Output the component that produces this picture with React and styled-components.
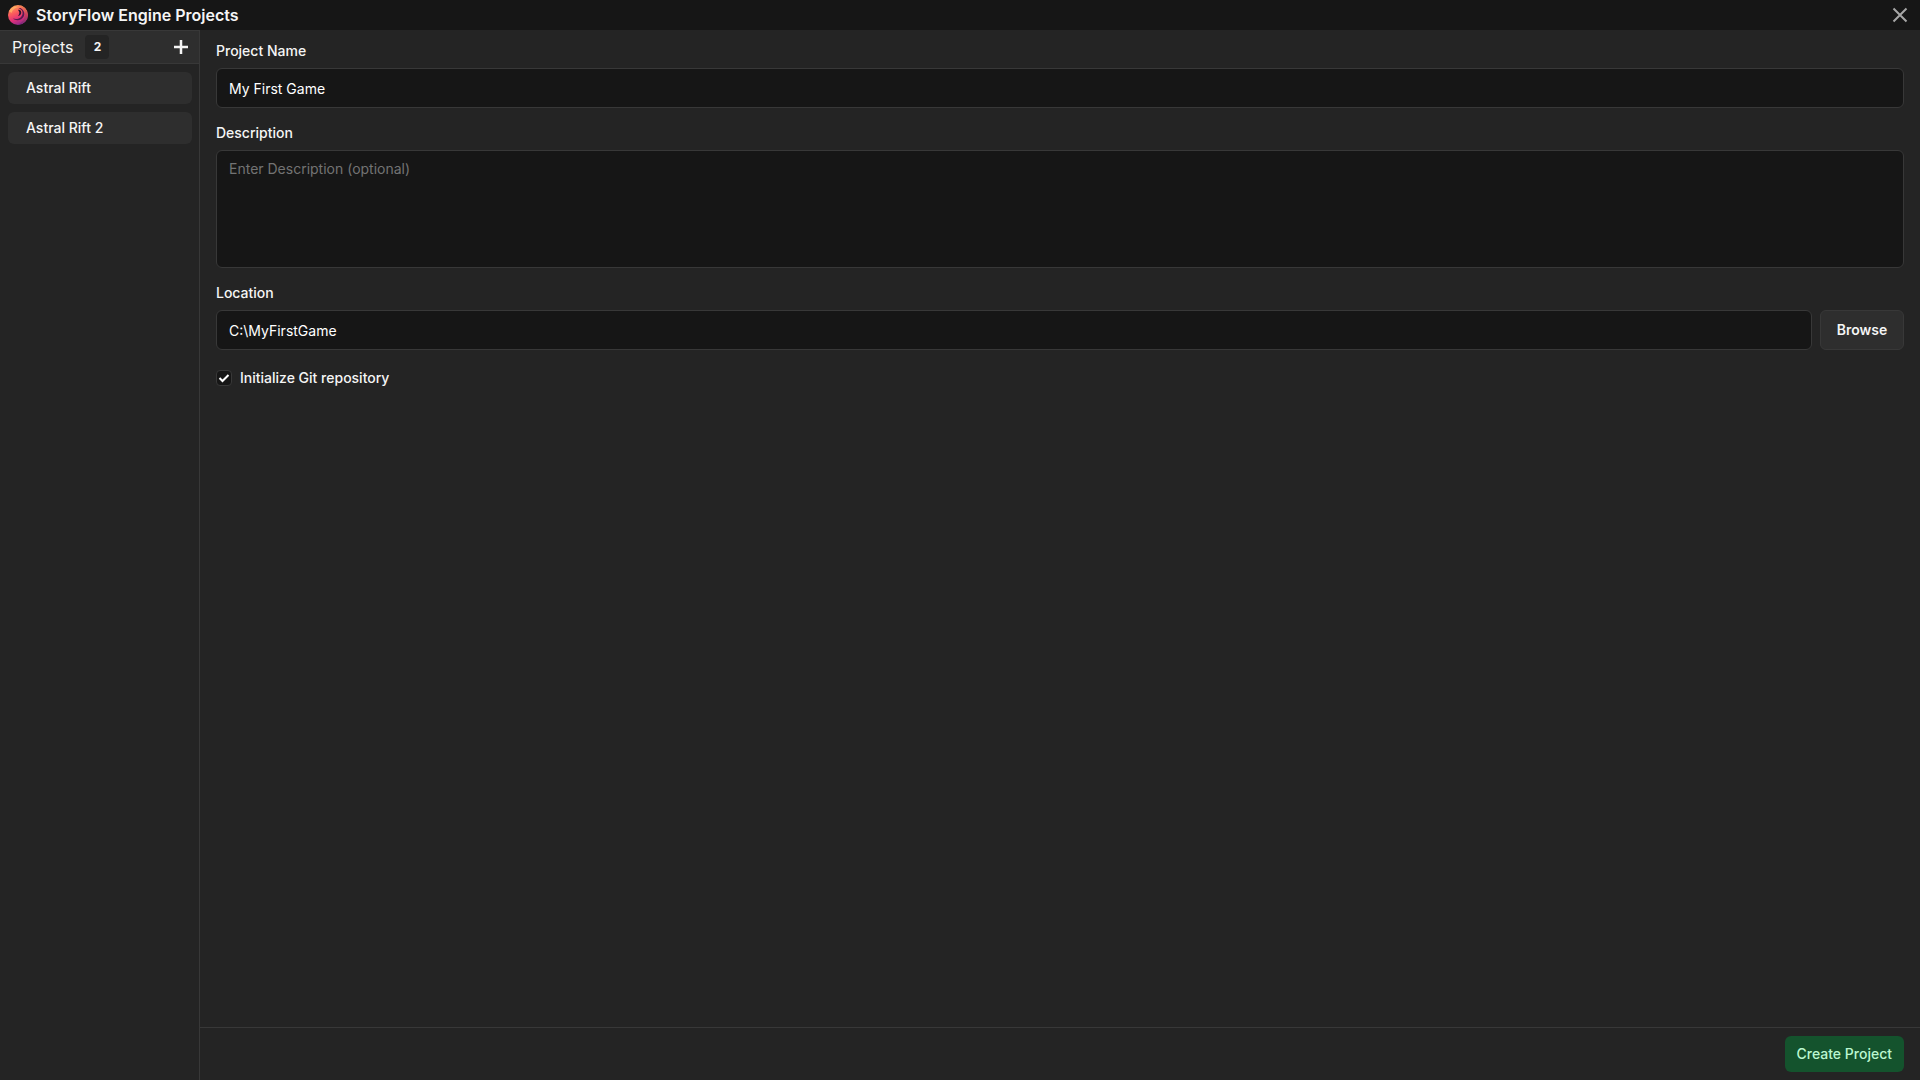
import React, { useState } from "react";
import styled, { createGlobalStyle } from "styled-components";

const GlobalStyle = createGlobalStyle`
  *, *::before, *::after { box-sizing: border-box; }
  body {
    margin: 0;
    background: #242424;
    color: #f5f5f5;
    font-family: Inter, "Liberation Sans", sans-serif;
    font-size: 14px;
    line-height: 20px;
  }
  button, input, textarea { font: inherit; color: inherit; margin: 0; }
  button { cursor: pointer; }
`;

const Window = styled.div`
  display: flex;
  flex-direction: column;
  min-height: 100vh;
`;

const TitleBar = styled.header`
  display: flex;
  align-items: center;
  gap: 8px;
  height: 30px;
  padding: 0 8px;
  background: #161616;
`;

const Title = styled.h1`
  flex: 1;
  margin: 0;
  font-size: 16px;
  line-height: 24px;
  font-weight: 600;
`;

const IconButton = styled.button`
  display: flex;
  align-items: center;
  justify-content: center;
  width: 24px;
  height: 24px;
  padding: 0;
  border: 0;
  background: transparent;
  color: ${({ $muted }) => ($muted ? "#a6a6a6" : "#f5f5f5")};
`;

const Body = styled.div`
  display: flex;
  flex: 1;
`;

const Sidebar = styled.aside`
  flex: none;
  width: 200px;
  border-right: 1px solid #383838;
`;

const SidebarHeader = styled.div`
  display: flex;
  align-items: center;
  gap: 12px;
  height: 34px;
  padding: 0 6px 0 12px;
  border-top: 1px solid #383838;
  border-bottom: 1px solid #383838;
  background: #2e2e2e;
`;

const SidebarTitle = styled.h2`
  margin: 0;
  font-size: 16px;
  line-height: 24px;
  font-weight: 400;
`;

const Count = styled.span`
  width: 24px;
  margin-right: auto;
  border-radius: 4px;
  background: #242424;
  font-size: 12px;
  line-height: 24px;
  font-weight: 700;
  text-align: center;
`;

const ProjectList = styled.nav`
  display: flex;
  flex-direction: column;
  gap: 8px;
  padding: 8px 7px 8px 8px;
`;

const ProjectItem = styled.button`
  height: 32px;
  padding: 0 18px;
  border: 0;
  border-radius: 6px;
  background: #2e2e2e;
  font-weight: 500;
  text-align: left;
`;

const Main = styled.form`
  display: flex;
  flex: 1;
  flex-direction: column;
  min-width: 0;
`;

const Fields = styled.div`
  display: flex;
  flex: 1;
  flex-direction: column;
  gap: 16px;
  padding: 12px 16px;
`;

const Field = styled.div`
  display: flex;
  flex-direction: column;
  gap: 8px;
`;

const Label = styled.label`
  line-height: 18px;
  font-weight: 500;
`;

const TextInput = styled.input`
  flex: 1;
  min-width: 0;
  min-height: 40px;
  padding: 2px 12px 0;
  border: 1px solid #383838;
  border-radius: 6px;
  outline: none;
  background: #161616;
  color: #fff;
`;

const TextArea = styled.textarea`
  display: block;
  height: 118px;
  padding: 8px 12px;
  border: 1px solid #383838;
  border-radius: 6px;
  outline: none;
  background: #161616;
  resize: none;
  &::placeholder { color: #737373; opacity: 1; }
`;

const InputRow = styled.div`
  display: flex;
  gap: 8px;
`;

const BrowseButton = styled.button`
  width: 84px;
  padding: 0;
  border: 1px solid #383838;
  border-radius: 6px;
  background: #2e2e2e;
  font-weight: 600;
`;

const CheckRow = styled.div`
  display: flex;
  align-items: center;
  gap: 8px;
  height: 24px;
`;

const CheckWrap = styled.span`
  display: grid;
  place-items: center;
  & > * { grid-area: 1 / 1; }
  svg { pointer-events: none; }
`;

const Checkbox = styled.input`
  appearance: none;
  width: 16px;
  height: 16px;
  border: 1px solid #383838;
  border-radius: 4px;
  background: #161616;
`;

const Footer = styled.footer`
  display: flex;
  justify-content: flex-end;
  padding: 8px 16px;
  border-top: 1px solid #383838;
`;

const CreateButton = styled.button`
  height: 36px;
  padding: 0 12px;
  border: 0;
  border-radius: 6px;
  background: #14532d;
  color: #bbf7d0;
  font-weight: 500;
`;

function Logo() {
  return (
    <svg width="20" height="20" viewBox="0 0 20 20" aria-hidden="true">
      <defs>
        <linearGradient id="body" x1="0.2" y1="0" x2="0.6" y2="1">
          <stop offset="0" stopColor="#ffa85a" />
          <stop offset="0.4" stopColor="#fb5a5c" />
          <stop offset="0.7" stopColor="#e0307a" />
          <stop offset="1" stopColor="#8a2a8c" />
        </linearGradient>
        <linearGradient id="back" x1="0.5" y1="0" x2="0.4" y2="1">
          <stop offset="0" stopColor="#f08a4c" />
          <stop offset="0.45" stopColor="#c8405c" />
          <stop offset="1" stopColor="#7a2480" />
        </linearGradient>
        <clipPath id="disc"><circle cx="10" cy="10" r="10" /></clipPath>
      </defs>
      <g clipPath="url(#disc)">
        <rect width="20" height="20" fill="url(#body)" />
        <path d="M11 0C17 0 20 5 20 10C20 16 15 20 9 20C14 18 17 14 17 9C17 5 14.500 2 11 0Z" fill="url(#back)" />
        <path d="M10.500 3.500C13.500 4 15 6.500 14.500 9C13.800 13 9.500 15 5 13.500C8 16.500 14 15.500 16 11C17.200 8 15.500 4.500 12.500 3C11.800 2.800 11 3 10.500 3.500Z" fill="#571b50" />
        <path d="M9.800 4.800C12 4.300 13.700 6 13.200 8.300C12.700 10 11.300 11 9.800 11.200C11 9.800 11.600 8.300 11.200 7C10.900 6.200 10.400 5.500 9.800 4.800Z" fill="#2b1430" />
        <path d="M1 6C3 2 7 0.500 10.500 2C7 2.500 4.500 4.500 3.500 8Z" fill="#ffb866" opacity="0.7" />
      </g>
    </svg>
  );
}

export default function App() {
  const [name, setName] = useState("My First Game");
  const [description, setDescription] = useState("");
  const [location, setLocation] = useState("C:\\MyFirstGame");
  const [git, setGit] = useState(true);
  const projects = ["Astral Rift", "Astral Rift 2"];

  return (
    <Window>
      <GlobalStyle />
      <TitleBar>
        <Logo />
        <Title>StoryFlow Engine Projects</Title>
        <IconButton type="button" aria-label="Close" $muted>
          <svg width="16" height="16" viewBox="0 0 16 16" fill="none" stroke="currentColor" strokeWidth="2">
            <path d="M1.500 1.500L14.500 14.500M14.500 1.500L1.500 14.500" />
          </svg>
        </IconButton>
      </TitleBar>
      <Body>
        <Sidebar>
          <SidebarHeader>
            <SidebarTitle>Projects</SidebarTitle>
            <Count>{projects.length}</Count>
            <IconButton type="button" aria-label="New project">
              <svg width="14" height="14" viewBox="0 0 14 14" fill="none" stroke="currentColor" strokeWidth="2.5">
                <path d="M7 0V14M0 7H14" />
              </svg>
            </IconButton>
          </SidebarHeader>
          <ProjectList aria-label="Projects">
            {projects.map((project) => (
              <ProjectItem key={project} type="button">{project}</ProjectItem>
            ))}
          </ProjectList>
        </Sidebar>
        <Main onSubmit={(event) => event.preventDefault()}>
          <Fields>
            <Field>
              <Label htmlFor="name">Project Name</Label>
              <TextInput id="name" value={name} onChange={(e) => setName(e.target.value)} />
            </Field>
            <Field>
              <Label htmlFor="description">Description</Label>
              <TextArea
                id="description"
                placeholder="Enter Description (optional)"
                value={description}
                onChange={(e) => setDescription(e.target.value)}
              />
            </Field>
            <Field>
              <Label htmlFor="location">Location</Label>
              <InputRow>
                <TextInput id="location" value={location} onChange={(e) => setLocation(e.target.value)} />
                <BrowseButton type="button">Browse</BrowseButton>
              </InputRow>
            </Field>
            <CheckRow>
              <CheckWrap>
                <Checkbox id="git" type="checkbox" checked={git} onChange={(e) => setGit(e.target.checked)} />
                {git && (
                  <svg width="12" height="12" viewBox="0 0 12 12" fill="none" stroke="#fff" strokeWidth="2">
                    <path d="M1.500 6L4.500 9L10.500 3" />
                  </svg>
                )}
              </CheckWrap>
              <Label htmlFor="git">Initialize Git repository</Label>
            </CheckRow>
          </Fields>
          <Footer>
            <CreateButton type="submit">Create Project</CreateButton>
          </Footer>
        </Main>
      </Body>
    </Window>
  );
}
